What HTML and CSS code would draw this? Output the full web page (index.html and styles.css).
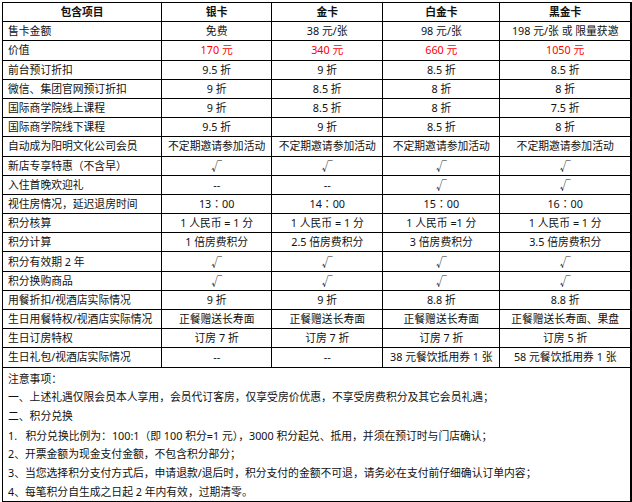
FILE: index.html
```html
<!DOCTYPE html>
<html lang="zh-CN">
<head>
<meta charset="utf-8">
<title>会员卡权益</title>
<link rel="stylesheet" href="styles.css">
</head>
<body>
<div class="page">
<table class="cards">
  <colgroup>
    <col class="c1"><col class="c2"><col class="c3"><col class="c4"><col class="c5">
  </colgroup>
  <thead>
    <tr class="head">
      <th>包含项目</th><th>银卡</th><th>金卡</th><th>白金卡</th><th>黑金卡</th>
    </tr>
  </thead>
  <tbody>
    <tr><td>售卡金额</td><td>免费</td><td>38 元/张</td><td>98 元/张</td><td>198 元/张 或 限量获邀</td></tr>
    <tr class="price"><td>价值</td><td>170 元</td><td>340 元</td><td>660 元</td><td>1050 元</td></tr>
    <tr><td>前台预订折扣</td><td>9.5 折</td><td>9 折</td><td>8.5 折</td><td>8.5 折</td></tr>
    <tr><td>微信、集团官网预订折扣</td><td>9 折</td><td>8.5 折</td><td>8 折</td><td>8 折</td></tr>
    <tr><td>国际商学院线上课程</td><td>9 折</td><td>8.5 折</td><td>8 折</td><td>7.5 折</td></tr>
    <tr><td>国际商学院线下课程</td><td>9.5 折</td><td>9 折</td><td>8.5 折</td><td>8 折</td></tr>
    <tr><td>自动成为阳明文化公司会员</td><td>不定期邀请参加活动</td><td>不定期邀请参加活动</td><td>不定期邀请参加活动</td><td>不定期邀请参加活动</td></tr>
    <tr><td>新店专享特惠（不含早）</td><td class="ck">√</td><td class="ck">√</td><td class="ck">√</td><td class="ck">√</td></tr>
    <tr><td>入住首晚欢迎礼</td><td>--</td><td>--</td><td class="ck">√</td><td class="ck">√</td></tr>
    <tr><td>视住房情况，延迟退房时间</td><td>13<span class="colon">：</span>00</td><td>14<span class="colon">：</span>00</td><td>15<span class="colon">：</span>00</td><td>16<span class="colon">：</span>00</td></tr>
    <tr><td>积分核算</td><td>1 人民币 = 1 分</td><td>1 人民币 = 1 分</td><td>1 人民币 =1 分</td><td>1 人民币 = 1 分</td></tr>
    <tr><td>积分计算</td><td>1 倍房费积分</td><td>2.5 倍房费积分</td><td>3 倍房费积分</td><td>3.5 倍房费积分</td></tr>
    <tr><td>积分有效期 2 年</td><td class="ck">√</td><td class="ck">√</td><td class="ck">√</td><td class="ck">√</td></tr>
    <tr><td>积分换购商品</td><td class="ck">√</td><td class="ck">√</td><td class="ck">√</td><td class="ck">√</td></tr>
    <tr><td>用餐折扣/视酒店实际情况</td><td>9 折</td><td>9 折</td><td>8.8 折</td><td>8.8 折</td></tr>
    <tr><td>生日用餐特权/视酒店实际情况</td><td>正餐赠送长寿面</td><td>正餐赠送长寿面</td><td>正餐赠送长寿面</td><td>正餐赠送长寿面、果盘</td></tr>
    <tr><td>生日订房特权</td><td>订房 7 折</td><td>订房 7 折</td><td>订房 7 折</td><td>订房 5 折</td></tr>
    <tr><td>生日礼包/视酒店实际情况</td><td>--</td><td>--</td><td>38 元餐饮抵用券 1 张</td><td>58 元餐饮抵用券 1 张</td></tr>
    <tr class="notes-row">
      <td colspan="5" class="notes">
        <p>注意事项<span class="colon">：</span></p>
        <p>一、上述礼遇仅限会员本人享用，会员代订客房，仅享受房价优惠，不享受房费积分及其它会员礼遇；</p>
        <p>二、积分兑换</p>
        <p>1.&nbsp;&nbsp;&nbsp;积分兑换比例为<span class="colon">：</span>100:1（即 100 积分=1 元），3000 积分起兑、抵用，并须在预订时与门店确认；</p>
        <p>2、开票金额为现金支付金额，不包含积分部分；</p>
        <p>3、当您选择积分支付方式后，申请退款/退后时，积分支付的金额不可退，请务必在支付前仔细确认订单内容；</p>
        <p>4、每笔积分自生成之日起 2 年内有效，过期清零。</p>
      </td>
    </tr>
  </tbody>
</table>
</div>
</body>
</html>
```

FILE: styles.css
```css
html, body {
  margin: 0;
  padding: 0;
  background: #fff;
}

.page {
  padding: 2px 0 0 2px;
  font-family: "Noto Sans", "Noto Sans CJK SC", sans-serif;
  font-size: 10.8px;
  color: #111;
}

.cards {
  border-collapse: collapse;
  table-layout: fixed;
  width: 630px;
  border-top: 1px solid #000;
  border-left: 1px solid #000;
  border-right: 2px solid #000;
  border-bottom: 2px solid #000;
}

.c1 { width: 159px; }
.c2 { width: 110px; }
.c3 { width: 111px; }
.c4 { width: 117px; }
.c5 { width: 131px; }

.cards th,
.cards td {
  border: 1px solid #000;
  height: 18.2px;
  padding: 0 2px;
  line-height: 14px;
  text-align: center;
  vertical-align: middle;
  white-space: nowrap;
  overflow: hidden;
}

.cards th {
  font-weight: bold;
}

.cards td:first-child {
  text-align: left;
  padding-left: 5px;
}

.cards td.ck {
  font-family: "Noto Sans CJK SC", sans-serif;
}

.price td:not(:first-child) {
  color: #ff0000;
}

.colon {
  font-family: "Noto Sans CJK TC", sans-serif;
}

.cards td.notes {
  height: auto;
  padding: 1px 0 0 5px;
  text-align: left;
}

.notes p {
  margin: 0;
  line-height: 18.7px;
}
```
